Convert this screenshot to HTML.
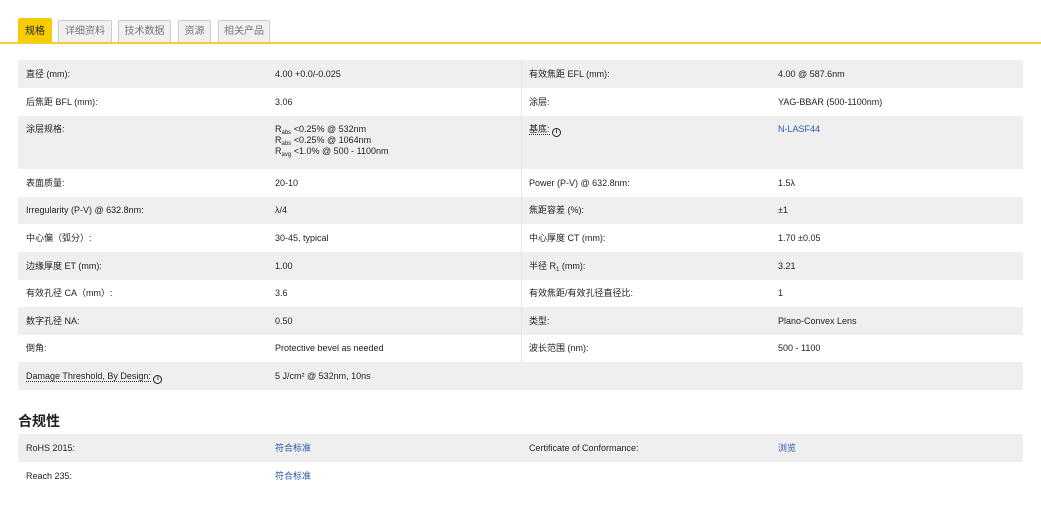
<!DOCTYPE html>
<html><head><meta charset="utf-8"><style>
*{margin:0;padding:0;box-sizing:border-box}
body{width:1041px;height:518px;background:#fff;font-family:"Liberation Sans","Noto Sans CJK SC",sans-serif;font-size:9px;color:#222;position:relative;overflow:hidden}
.tab{position:absolute;top:20px;height:23px;border:1px solid #ccc;border-bottom:none;background:#f0f0f0;color:#777;font-size:10px;line-height:22px;text-align:center;border-radius:2px 2px 0 0}
.tab.act{background:#f6cd00;border-color:#f6cd00;color:#222;top:18px;height:25px;line-height:26px}
.line{position:absolute;top:42px;left:0;width:1041px;height:2px;background:#f0d030}
.row{position:absolute;left:18px;width:1005px}
.row.g{background:#efefef}
.row span{position:absolute;top:0}
.c1{left:8px}.c2{left:257px}.c3{left:511px}.c4{left:760px}
.div{position:absolute;left:521px;top:60px;width:1px;height:303px;background:#e6e6e6}
a{color:#2a5aa8;text-decoration:none}
.dot{border-bottom:1px dotted #333}
.i{display:inline-block;width:9px;height:9px;border:1.5px solid #222;border-radius:50%;font-size:6px;line-height:6px;text-align:center;font-weight:bold;vertical-align:-1px}
sub{font-size:6px;line-height:0;vertical-align:-2px}
h3{position:absolute;left:18px;top:411px;font-size:14px;font-weight:bold;color:#222}
</style></head><body>
<div class="tab act" style="left:18px;width:34px">规格</div>
<div class="tab" style="left:58px;width:54px">详细资料</div>
<div class="tab" style="left:118px;width:53px">技术数据</div>
<div class="tab" style="left:178px;width:33px">资源</div>
<div class="tab" style="left:218px;width:52px">相关产品</div>
<div class="line"></div>

<div class="row g" style="top:60px;height:28px;line-height:28px"><span class="c1">直径 (mm):</span><span class="c2">4.00 +0.0/-0.025</span><span class="c3">有效焦距 EFL (mm):</span><span class="c4">4.00 @ 587.6nm</span></div>
<div class="row" style="top:88px;height:28px;line-height:28px"><span class="c1">后焦距 BFL (mm):</span><span class="c2">3.06</span><span class="c3">涂层:</span><span class="c4">YAG-BBAR (500-1100nm)</span></div>
<div class="row g" style="top:116px;height:53px;line-height:11px"><span class="c1" style="top:8px">涂层规格:</span><span class="c2" style="top:8px">R<sub>abs</sub> &lt;0.25% @ 532nm<br>R<sub>abs</sub> &lt;0.25% @ 1064nm<br>R<sub>avg</sub> &lt;1.0% @ 500 - 1100nm</span><span class="c3" style="top:8px"><span class="dot" style="position:static">基底:</span> <span class="i" style="position:static">i</span></span><span class="c4" style="top:8px"><a>N-LASF44</a></span></div>
<div class="row" style="top:169px;height:28px;line-height:28px"><span class="c1">表面质量:</span><span class="c2">20-10</span><span class="c3">Power (P-V) @ 632.8nm:</span><span class="c4">1.5λ</span></div>
<div class="row g" style="top:197px;height:27px;line-height:27px"><span class="c1">Irregularity (P-V) @ 632.8nm:</span><span class="c2">λ/4</span><span class="c3">焦距容差 (%):</span><span class="c4">±1</span></div>
<div class="row" style="top:224px;height:28px;line-height:28px"><span class="c1">中心偏（弧分）:</span><span class="c2">30-45, typical</span><span class="c3">中心厚度 CT (mm):</span><span class="c4">1.70 ±0.05</span></div>
<div class="row g" style="top:252px;height:28px;line-height:28px"><span class="c1">边缘厚度 ET (mm):</span><span class="c2">1.00</span><span class="c3">半径 R<sub>1</sub> (mm):</span><span class="c4">3.21</span></div>
<div class="row" style="top:280px;height:27px;line-height:27px"><span class="c1">有效孔径 CA（mm）:</span><span class="c2">3.6</span><span class="c3">有效焦距/有效孔径直径比:</span><span class="c4">1</span></div>
<div class="row g" style="top:307px;height:28px;line-height:28px"><span class="c1">数字孔径 NA:</span><span class="c2">0.50</span><span class="c3">类型:</span><span class="c4">Plano-Convex Lens</span></div>
<div class="row" style="top:335px;height:27px;line-height:27px"><span class="c1">倒角:</span><span class="c2">Protective bevel as needed</span><span class="c3">波长范围 (nm):</span><span class="c4">500 - 1100</span></div>
<div class="row g" style="top:362px;height:28px;line-height:28px"><span class="c1"><span class="dot" style="position:static">Damage Threshold, By Design:</span> <span class="i" style="position:static">i</span></span><span class="c2">5 J/cm² @ 532nm, 10ns</span></div>
<div class="div"></div>

<h3>合规性</h3>
<div class="row g" style="top:434px;height:28px;line-height:28px"><span class="c1">RoHS 2015:</span><span class="c2"><a>符合标准</a></span><span class="c3">Certificate of Conformance:</span><span class="c4"><a>浏览</a></span></div>
<div class="row" style="top:462px;height:28px;line-height:28px"><span class="c1">Reach 235:</span><span class="c2"><a>符合标准</a></span></div>
</body></html>
